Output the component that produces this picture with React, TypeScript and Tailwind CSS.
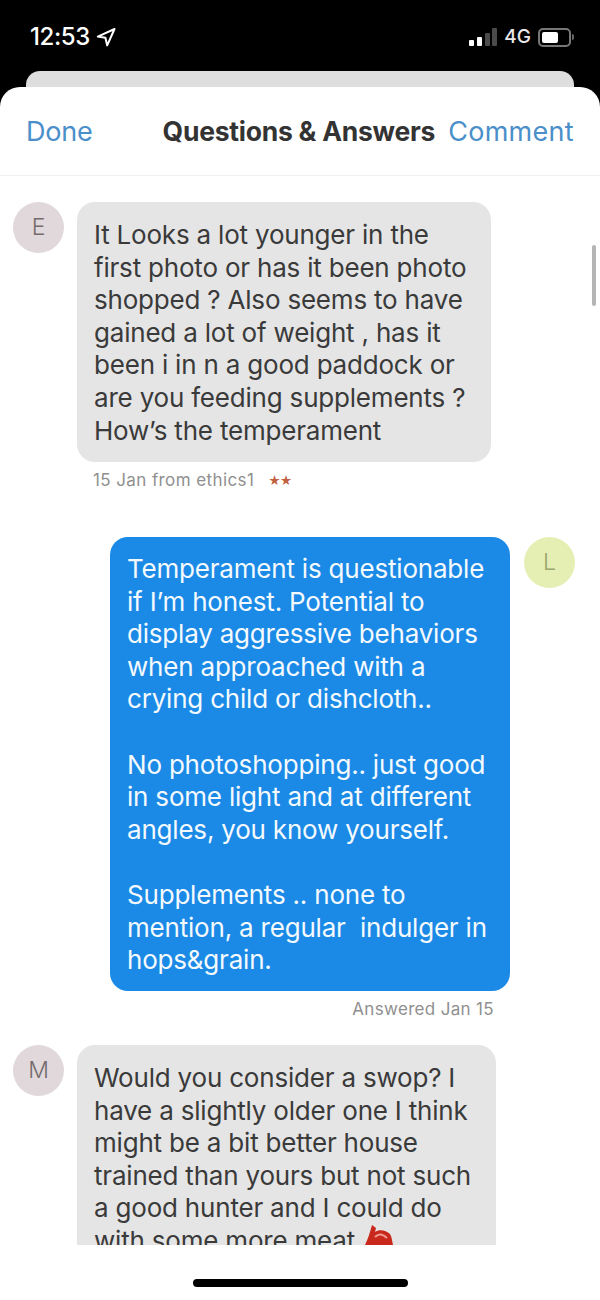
const textFont = "font-['Inter','Liberation_Sans',sans-serif]";

function Lines({ lines }: { lines: string[] }) {
  return (
    <>
      {lines.map((line, i) => (
        <div key={i} className="h-[32.6px] whitespace-pre">
          {line || ' '}
        </div>
      ))}
    </>
  );
}

function Avatar({ letter, className }: { letter: string; className: string }) {
  return (
    <div className={`flex h-[51px] w-[51px] shrink-0 items-center justify-center rounded-full text-[23px] font-light ${className}`}>
      {letter}
    </div>
  );
}

const question1 = [
  'It Looks a lot younger in the',
  'first photo or has it been photo',
  'shopped ? Also seems to have',
  'gained a lot of weight , has it',
  'been i in n a good paddock or',
  'are you feeding supplements ?',
  'How’s the temperament',
];

const answer = [
  'Temperament is questionable',
  'if I’m honest. Potential to',
  'display aggressive behaviors',
  'when approached with a',
  'crying child or dishcloth..',
  '',
  'No photoshopping.. just good',
  'in some light and at different',
  'angles, you know yourself.',
  '',
  'Supplements .. none to',
  'mention, a regular  indulger in',
  'hops&grain.',
];

const question2 = [
  'Would you consider a swop? I',
  'have a slightly older one I think',
  'might be a bit better house',
  'trained than yours but not such',
  'a good hunter and I could do',
];

export default function App() {
  return (
    <div className={`flex h-[1300px] w-[600px] flex-col overflow-hidden bg-black ${textFont}`}>
      {/* status bar */}
      <div className="flex h-[71px] shrink-0 items-start justify-between pl-[30px] pr-[26px] pt-[24px] text-white">
        <div className="flex items-center gap-[6px]">
          <span className="text-[24px] font-medium leading-[26px] tracking-[-0.4px]">12:53</span>
          <svg width="20" height="20" viewBox="0 0 20 20" fill="none" stroke="white" strokeWidth="2" strokeLinejoin="round">
            <path d="M18.5 2 1.8 9.6 9.4 10.8 11.2 18.4Z" />
          </svg>
        </div>
        <div className="flex items-center pt-[3px]">
          <svg width="28" height="20" viewBox="0 0 28 20" className="mr-[7px]">
            <rect x="0" y="13" width="5" height="6" rx="1" fill="#fff" />
            <rect x="8" y="10" width="5" height="9" rx="1" fill="#fff" />
            <rect x="16" y="6" width="5" height="13" rx="1" fill="#4a4a4a" />
            <rect x="23" y="1" width="5" height="18" rx="1" fill="#4a4a4a" />
          </svg>
          <span className="mr-[7px] text-[19px] font-medium leading-[20px] text-[#e8e8e8]">4G</span>
          <div className="flex h-[19px] w-[33px] items-center rounded-[5px] border-2 border-[#777] p-[2px]">
            <div className="h-full w-[62%] rounded-[2px] bg-white" />
          </div>
          <div className="ml-[1px] h-[6px] w-[2px] rounded-r-full bg-[#666]" />
        </div>
      </div>

      {/* sheet stacked on the one behind it */}
      <div className="mx-[26px] h-[16px] shrink-0 rounded-t-[14px] bg-[#dedede]" />
      <div className="flex min-h-0 flex-1 flex-col rounded-t-[20px] bg-white">
        <div className="flex h-[89px] shrink-0 items-center justify-between border-b border-[#f2f2f2] px-[26px] pt-[2px] text-[27px]">
          <span className="tracking-[-0.2px] text-[#4a8fc9]">Done</span>
          <span className="ml-[57px] text-[26.5px] font-bold tracking-[-0.25px] text-[#333]">Questions &amp; Answers</span>
          <span className="tracking-[0.3px] text-[#4a8fc9]">Comment</span>
        </div>

        <div className="relative h-[1069px] shrink-0 overflow-hidden text-[26px] tracking-[-0.2px] text-[#3a3a3a]">
          <div className="absolute right-[4px] top-[69px] h-[61px] w-[4px] rounded-full bg-[#b5b5b5]" />

          <div className="flex gap-[13px] pl-[13px] pt-[26px]">
            <Avatar letter="E" className="bg-[#e0d8da] text-[#756a6d]" />
            <div>
              <div className="h-[260px] w-[414px] rounded-[18px] bg-[#e5e5e5] pl-[17px] pt-[17px] leading-[32.6px]">
                <Lines lines={question1} />
              </div>
              <div className="mt-[9px] flex h-[20px] items-center pl-[16px] text-[17px] tracking-[0.4px] text-[#8f8f8f]">
                15 Jan from ethics1
                <span className="ml-[14px] text-[12px] tracking-[-1px] text-[#c2613f]">★★</span>
              </div>
            </div>
          </div>

          <div className="mt-[46px] flex justify-end gap-[14px] pr-[25px]">
            <div>
              <div className="h-[454px] w-[400px] rounded-[18px] bg-[#1a8ae6] pl-[17px] pt-[16px] leading-[32.6px] text-[#f4f9fd]">
                <Lines lines={answer} />
              </div>
              <div className="mt-[8px] h-[20px] pr-[16px] text-right text-[17px] leading-[20px] tracking-[0.33px] text-[#8f8f8f]">
                Answered Jan 15
              </div>
            </div>
            <Avatar letter="L" className="bg-[#e5efb4] text-[#9aa56a]" />
          </div>

          <div className="mt-[26px] flex gap-[13px] pl-[13px]">
            <Avatar letter="M" className="bg-[#e0d8da] text-[#756a6d]" />
            <div className="h-[260px] w-[419px] rounded-[18px] bg-[#e5e5e5] pl-[17px] pt-[17px] leading-[32.6px]">
              <Lines lines={question2} />
              <div className="flex h-[32.6px] items-center whitespace-pre">
                with some more meat
                <svg width="28" height="20" viewBox="0 0 28 20" className="ml-[10px] mt-[-12px]">
                  <path d="M7 0 11 3 10 7C14 4 21 5 25 9 27 12 27 16 28 20L0 20C3 14 5 7 7 0Z" fill="#c9281c" />
                  <path d="M10 12C14 8 18 9 22 13" stroke="#ef9c92" strokeWidth="2" fill="none" />
                </svg>
              </div>
            </div>
          </div>
        </div>

        {/* home indicator */}
        <div className="flex flex-1 justify-center pt-[34px]">
          <div className="h-[8px] w-[215px] rounded-full bg-black" />
        </div>
      </div>
    </div>
  );
}
